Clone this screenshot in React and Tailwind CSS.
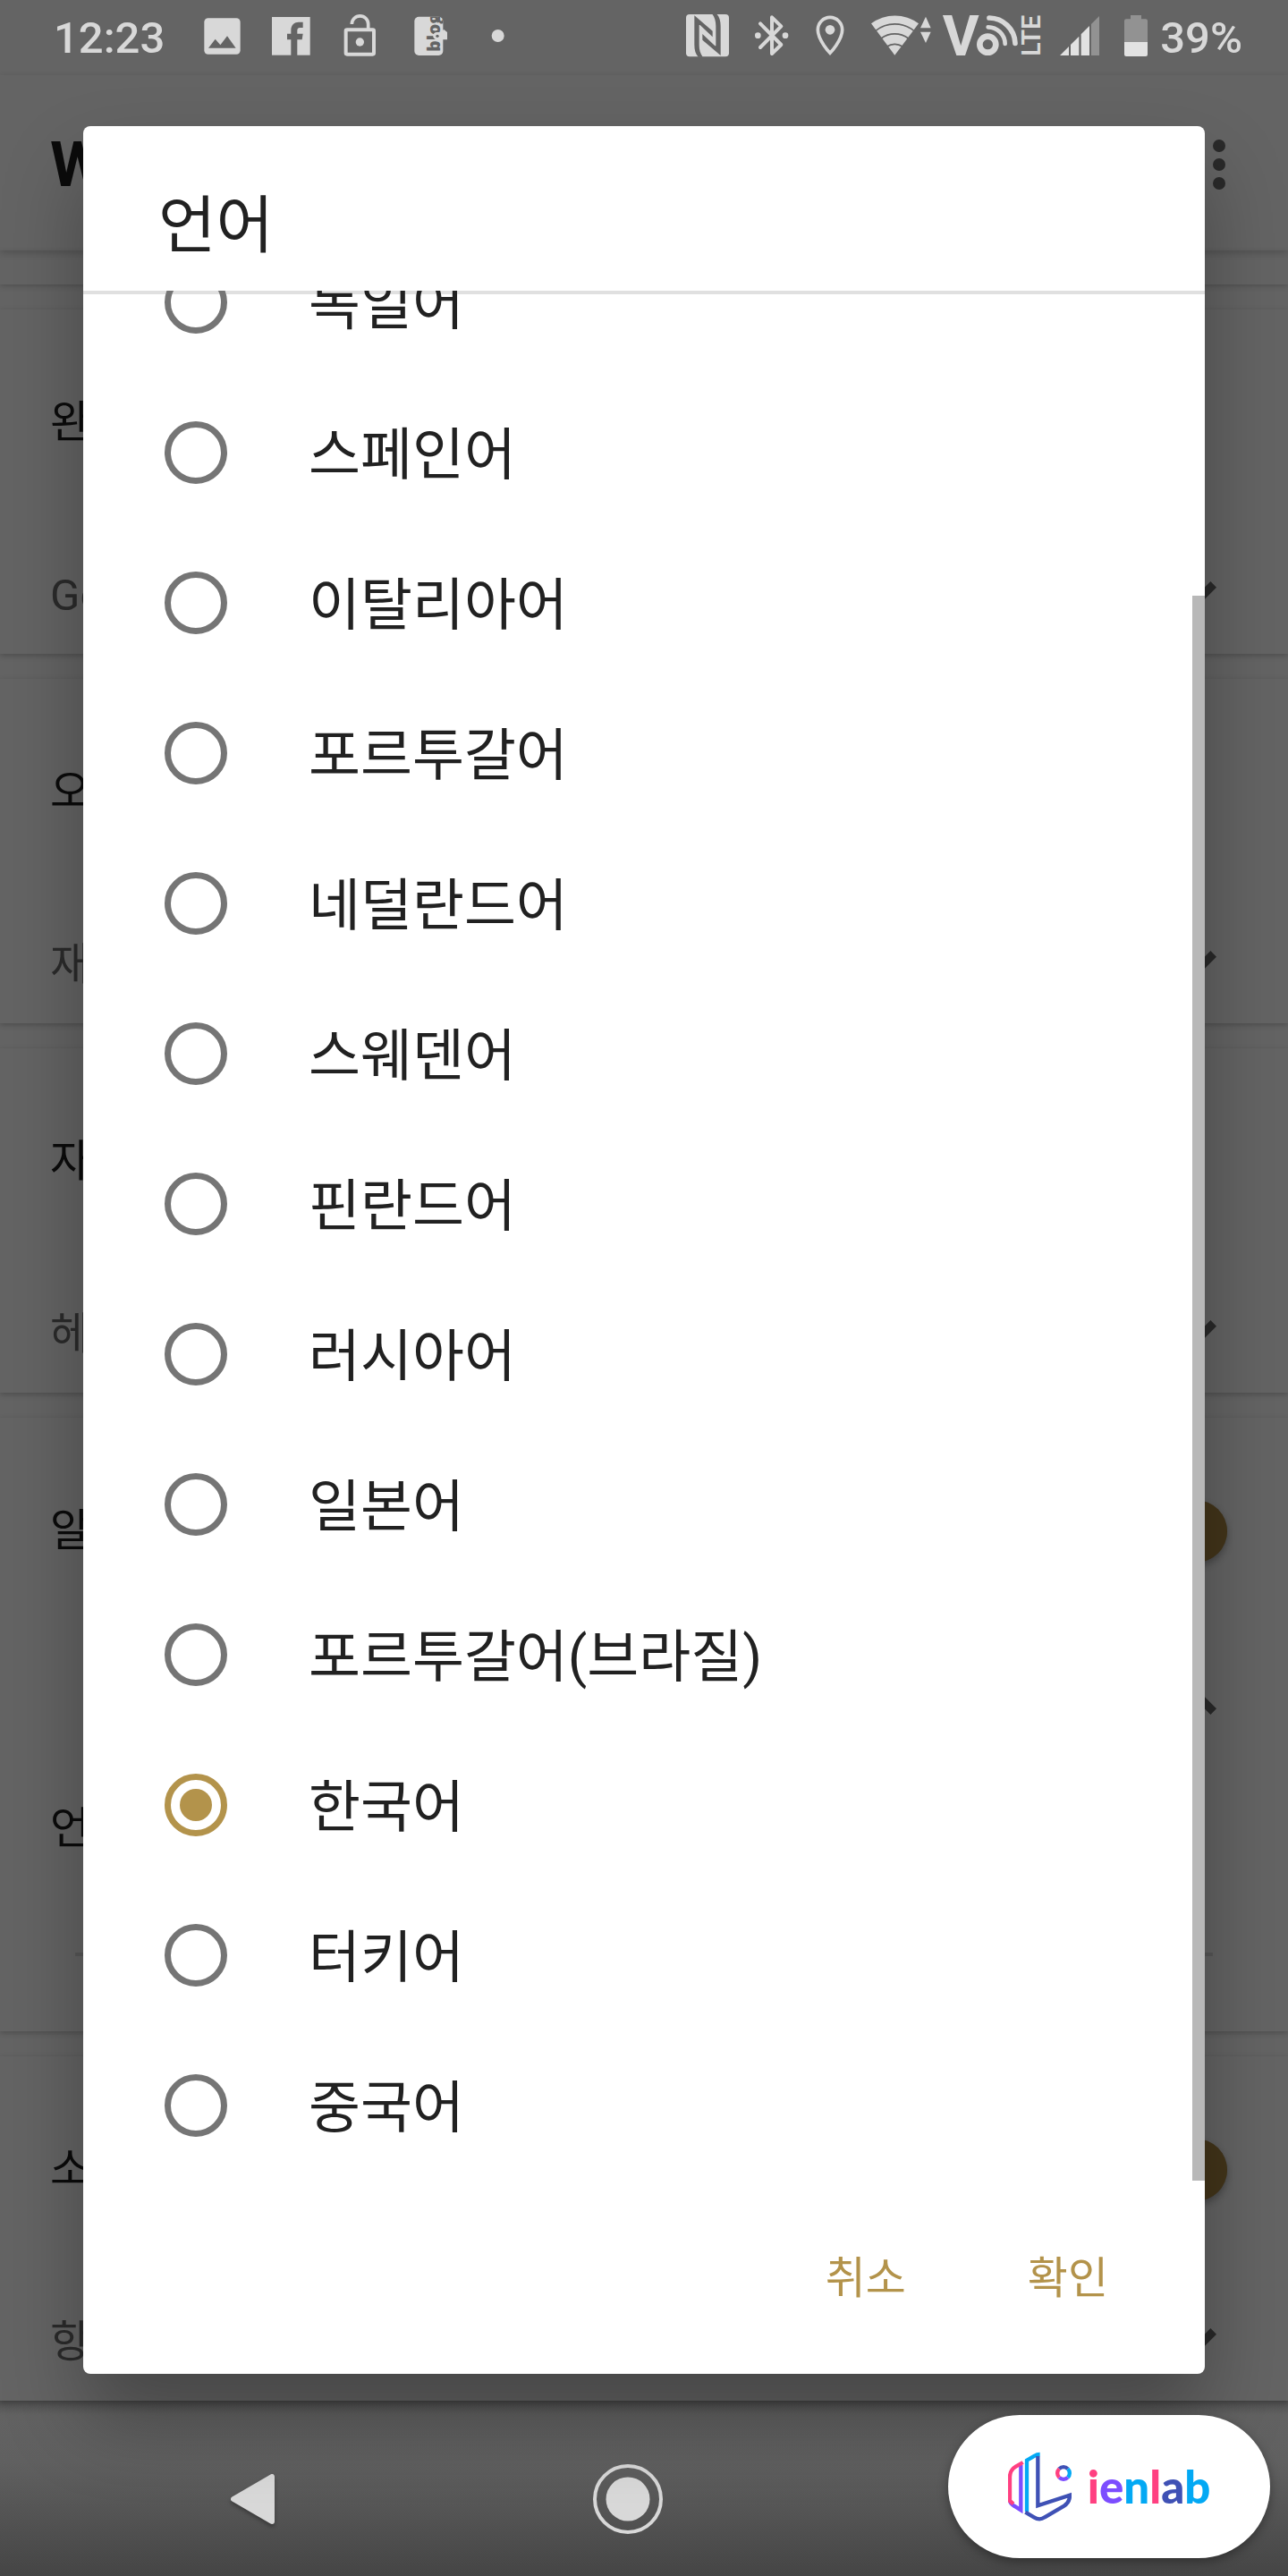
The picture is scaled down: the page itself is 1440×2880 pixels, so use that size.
import React, { useState } from "react";

const LIGHT = "#d8d8d8";
const DIM = "#929292";
const BG = "#646464";

const LANGUAGES = [
  "독일어",
  "스페인어",
  "이탈리아어",
  "포르투갈어",
  "네덜란드어",
  "스웨덴어",
  "핀란드어",
  "러시아어",
  "일본어",
  "포르투갈어(브라질)",
  "한국어",
  "터키어",
  "중국어",
];

/* ---------- status bar ---------- */

function NotificationIcons() {
  return (
    <div className="flex items-center gap-7">
      <svg className="h-[84px] w-[49px]" viewBox="552 0 147 252" aria-label="사진">
        <rect x="565" y="61" width="121" height="121" rx="13" fill={LIGHT} />
        <path d="M579 161 602 131 619 151 642 121 671 161Z" fill={BG} />
      </svg>
      <svg className="h-[84px] w-[49px]" viewBox="783 0 147 252" aria-label="Facebook">
        <rect x="792" y="57" width="128" height="128" fill={LIGHT} />
        <path
          d="M856 186V133H843V113H856V102C856 83 868 74 882 74H896V93H886C879 93 877 97 877 103V113H896L893 133H877V186Z"
          fill={BG}
        />
      </svg>
      <svg className="h-[84px] w-[49px]" viewBox="1014 0 147 252" aria-label="잠금 해제">
        <rect x="1040" y="100" width="94" height="82" rx="4" fill="none" stroke={LIGHT} strokeWidth="12" />
        <path d="M1060 81A27 27 0 0 1 1115 81V96" fill="none" stroke={LIGHT} strokeWidth="11" />
        <circle cx="1087" cy="141" r="14" fill={LIGHT} />
      </svg>
      <svg className="h-[84px] w-[49px]" viewBox="1245 0 147 252" aria-label="블로그">
        <defs>
          <clipPath id="blog-clip">
            <rect x="1270" y="56" width="96" height="130" rx="15" />
          </clipPath>
        </defs>
        <rect x="1270" y="56" width="96" height="130" rx="15" fill={LIGHT} />
        <g clipPath="url(#blog-clip)">
          <text
            transform="translate(1356 173) rotate(-90)"
            fontFamily="Open Sans, sans-serif"
            fontWeight="800"
            fontSize="58"
            fill={BG}
          >
            blog
          </text>
        </g>
        <path d="M1345 108H1362L1368 98 1380 108V133H1345A12 12 0 0 1 1345 108Z" fill={LIGHT} />
        <circle cx="1347" cy="121" r="5" fill={BG} />
      </svg>
      <svg className="h-[84px] w-[49px]" viewBox="1474 0 147 252" aria-hidden="true">
        <circle cx="1548" cy="120" r="21" fill={LIGHT} />
      </svg>
    </div>
  );
}

function SystemIcons() {
  return (
    <div className="flex items-center">
      <svg className="h-[84px] w-[66px]" viewBox="30 0 198 252" aria-label="NFC">
        <rect x="48" y="48" width="144" height="142" rx="12" fill={LIGHT} />
        <path
          id="nfc-half"
          d="M76 52 137 104V124L95 84H92V150C92 168 96 180 104 191H89C80 182 76 168 76 150Z"
          fill={BG}
        />
        <use href="#nfc-half" transform="rotate(180 120 119)" />
      </svg>
      <svg className="h-[84px] w-[70px]" viewBox="228 0 210 252" aria-label="블루투스">
        <path
          d="M297 79 367 150 336 180V58L367 88 297 159"
          fill="none"
          stroke={LIGHT}
          strokeWidth="12"
          strokeLinecap="round"
          strokeLinejoin="round"
        />
        <circle cx="289" cy="119" r="10" fill={LIGHT} />
        <circle cx="381" cy="119" r="10" fill={LIGHT} />
      </svg>
      <svg className="h-[84px] w-[62px]" viewBox="438 0 186 252" aria-label="위치">
        <path
          d="M531 178C531 178 490 135 490 100A41 42 0 0 1 572 100C572 135 531 178 531 178Z"
          fill="none"
          stroke={LIGHT}
          strokeWidth="11"
        />
        <circle cx="531" cy="100" r="16" fill={LIGHT} />
      </svg>
      <svg className="h-[84px] w-[88px]" viewBox="624 0 264 252" aria-label="Wi-Fi">
        <path d="M748 185 669 79A132 132 0 0 1 828 79Z" fill={LIGHT} />
        <g fill="none" stroke={BG} strokeWidth="5">
          <path d="M684 103A103 103 0 0 1 812 103" />
          <path d="M702 129A76 76 0 0 1 794 129" />
          <path d="M722 156A46 46 0 0 1 774 156" />
        </g>
        <path d="M834 94H869L852 56ZM834 107H869L852 144Z" fill={LIGHT} />
      </svg>
      <svg className="h-[84px] w-[126px]" viewBox="888 0 378 252" aria-label="VoLTE">
        <text x="908" y="186" fontFamily="Roboto, sans-serif" fontWeight="700" fontSize="188" fill={LIGHT}>
          V
        </text>
        <circle cx="1060" cy="149" r="27" fill="none" stroke={LIGHT} strokeWidth="20" />
        <path d="M1065 60A88 88 0 0 1 1152 145" fill="none" stroke={LIGHT} strokeWidth="17" strokeLinecap="round" />
        <path d="M1061 91A57 57 0 0 1 1118 147" fill="none" stroke={LIGHT} strokeWidth="14" strokeLinecap="round" />
        <text
          transform="translate(1235 188) rotate(-90)"
          fontFamily="Roboto, sans-serif"
          fontWeight="600"
          fontSize="86"
          fill={LIGHT}
        >
          LTE
        </text>
      </svg>
      <svg className="h-[84px] w-[70px]" viewBox="396 0 210 252" aria-label="신호 세기">
        <path d="M432 186 462 156V186ZM468 186V150L496 122V186ZM503 186V115L531 87V186Z" fill="#e2e2e2" />
        <path d="M537 186V81L564 54V186Z" fill={DIM} />
      </svg>
      <svg className="h-[84px] w-[54px]" viewBox="606 0 162 252" aria-label="배터리">
        <path d="M669 51H705V64H720Q726 64 726 70V141H648V70Q648 64 654 64H669Z" fill={DIM} />
        <path d="M648 141H726V183Q726 189 720 189H654Q648 189 648 183Z" fill="#e2e2e2" />
      </svg>
      <span>39%</span>
    </div>
  );
}

function StatusBar() {
  return (
    <div className="flex h-[84px] items-center justify-between pr-[51px] pl-[60px] font-[Roboto,sans-serif] text-[49px] leading-none font-medium text-[#d8d8d8]">
      <div className="flex items-center gap-10">
        <span>12:23</span>
        <NotificationIcons />
      </div>
      <SystemIcons />
    </div>
  );
}

/* ---------- settings behind the dialog ---------- */

function Chevron({ up }) {
  return (
    <svg className="size-28 shrink-0" viewBox="0 0 24 24" fill="#2a2a2a" aria-hidden="true">
      {up ? (
        <path d="M12 8l-6 6 1.41 1.41L12 10.83l4.59 4.58L18 14z" />
      ) : (
        <path d="M16.59 8.59L12 13.17 7.41 8.59 6 10l6 6 6-6z" />
      )}
    </svg>
  );
}

function Switch({ label }) {
  return (
    <input
      type="checkbox"
      role="switch"
      defaultChecked
      aria-label={label}
      className="mr-4 flex h-12 w-[120px] appearance-none items-center justify-end rounded-full bg-[#54492f] before:size-[70px] before:rounded-full before:bg-[#43351a] before:shadow-[0_4px_8px_rgba(0,0,0,0.3)]"
    />
  );
}

function Card({ title, toggle, children }) {
  return (
    <section className="bg-[#646464] pt-[91px] shadow-[0_2px_6px_rgba(0,0,0,0.22)]">
      <div className="flex h-[72px] items-center justify-between pr-[52px] pl-14">
        <h2 className="text-[#0b0b0b]">{title}</h2>
        {toggle && <Switch label={title} />}
      </div>
      {children}
    </section>
  );
}

function ValueRow({ value }) {
  return (
    <div className="mt-[121px] mb-[29px] flex h-[72px] items-center justify-between pr-[52px] pl-14 text-[#2b2b2b]">
      <span>{value}</span>
      <Chevron />
    </div>
  );
}

function Settings() {
  return (
    <div className="text-[49px] leading-[72px]">
      <header className="flex h-[196px] items-center justify-between pt-1 pr-[70px] pl-14 shadow-[0_3px_8px_rgba(0,0,0,0.18)]">
        <h1 className="font-[Roboto,sans-serif] text-[70px] font-bold text-[#0b0b0b]">W</h1>
        <button type="button" aria-label="더보기" className="flex flex-col gap-[7px]">
          <span className="size-3.5 rounded-full bg-[#2a2a2a]" />
          <span className="size-3.5 rounded-full bg-[#2a2a2a]" />
          <span className="size-3.5 rounded-full bg-[#2a2a2a]" />
        </button>
      </header>
      <div className="h-[38px] shadow-[0_2px_6px_rgba(0,0,0,0.18)]" />
      <main className="grid gap-7 pt-7">
        <Card title="완">
          <ValueRow value="Go" />
        </Card>
        <Card title="오">
          <ValueRow value="재" />
        </Card>
        <Card title="자">
          <ValueRow value="헤" />
        </Card>
        <Card title="알" toggle>
          <div className="mt-[117px] flex h-[72px] items-center justify-end pr-[52px]">
            <Chevron up />
          </div>
          <div className="mt-[72px] pl-14 text-[#0b0b0b]">언</div>
          <hr className="mx-[84px] mt-[102px] mb-[84px] border-t-4 border-[#575757]" />
        </Card>
        <Card title="소" toggle>
          <ValueRow value="항" />
        </Card>
      </main>
    </div>
  );
}

/* ---------- language dialog ---------- */

function LanguageDialog() {
  const [selected, setSelected] = useState("한국어");
  return (
    <div className="absolute inset-0 px-[93px] pt-[141px]">
      <div
        role="dialog"
        aria-labelledby="dialog-title"
        className="rounded-lg bg-white shadow-[0_50px_90px_rgba(0,0,0,0.3)]"
      >
        <h2 id="dialog-title" className="px-[84px] pt-16 pb-6 text-[70px] leading-[96px] text-[#212121]">
          언어
        </h2>
        <div className="relative">
          <fieldset className="flex h-[2113px] flex-col justify-end overflow-hidden shadow-[inset_0_4px_0_#e0e0e0]">
            {LANGUAGES.map((name) => (
              <label
                key={name}
                className="flex h-[168px] shrink-0 items-center gap-[91px] px-[91px] text-[63px] leading-[84px] text-[#212121]"
              >
                <input
                  type="radio"
                  name="language"
                  checked={selected === name}
                  onChange={() => setSelected(name)}
                  className="grid size-[70px] shrink-0 appearance-none place-items-center rounded-full border-[7px] border-[#757575] checked:border-[#b3934b] checked:before:size-9 checked:before:rounded-full checked:before:bg-[#b3934b]"
                />
                <span className="pt-1.5">{name}</span>
              </label>
            ))}
          </fieldset>
          <div className="absolute right-0 bottom-0 h-[1772px] w-3.5 bg-[#b8b8b8]" />
        </div>
        <div className="flex h-[216px] items-center justify-end gap-20 pt-1 pr-20 text-[49px] leading-[72px] text-[#b3934b]">
          <button type="button" className="px-7">
            취소
          </button>
          <button type="button" className="px-7">
            확인
          </button>
        </div>
      </div>
    </div>
  );
}

/* ---------- navigation bar and badge ---------- */

function NavigationBar() {
  return (
    <nav className="grid h-[196px] grid-cols-3 items-center justify-items-center bg-[linear-gradient(to_bottom,#4e4e4e_0px,#626262_16px,#606060_35%,#454545_100%)] pt-6 pr-[110px] pl-[73px]">
      <button type="button" aria-label="뒤로">
        <svg className="h-[58px] w-[52px] drop-shadow-[0_3px_2px_rgba(0,0,0,0.3)]" viewBox="0 0 52 58">
          <path d="M4 29 47 4V54Z" fill={LIGHT} stroke={LIGHT} strokeWidth="6" strokeLinejoin="round" />
        </svg>
      </button>
      <button type="button" aria-label="홈">
        <svg className="size-20" viewBox="0 0 80 80">
          <circle cx="40" cy="40" r="37" fill="none" stroke={LIGHT} strokeWidth="4" />
          <circle cx="40" cy="40" r="24.5" fill={LIGHT} />
        </svg>
      </button>
    </nav>
  );
}

function IenlabBadge() {
  return (
    <div className="absolute right-5 bottom-5 flex h-40 w-[360px] items-center justify-center gap-[18px] rounded-full bg-white shadow-[0_4px_12px_rgba(0,0,0,0.35)]">
      <svg className="h-20 w-[71px] shrink-0" viewBox="258 180 213 240" fill="none" strokeWidth="13" aria-hidden="true">
        <path d="M264 346Q265 358 280 366L301 379V228" stroke="#7c4dff" />
        <path d="M308 219 284 233Q264 245 264 268V348L276 358" stroke="#ff4081" />
        <path d="M321 384V212L347 197Q354 192 365 192" stroke="#03a9f4" />
        <path d="M358 198V364L465 329Q465 353 446 365L381 403Q364 415 345 403L316 386" stroke="#3f51b5" />
        <path d="M429.500 240.500A20.500 20.500 0 0 1 458.500 240.500" stroke="#3f51b5" />
        <path d="M458.500 240.500A20.500 20.500 0 0 1 458.500 269.500" stroke="#03a9f4" />
        <path d="M458.500 269.500A20.500 20.500 0 0 1 429.500 269.500" stroke="#7c4dff" />
        <path d="M429.500 269.500A20.500 20.500 0 0 1 429.500 240.500" stroke="#ff4081" />
      </svg>
      <span className="font-[Lato,sans-serif] text-[51px] leading-[60px] font-black">
        <span className="text-[#ff4081]">i</span>
        <span className="text-[#7c4dff]">e</span>
        <span className="text-[#03a9f4]">n</span>
        <span className="text-[#ff4081]">l</span>
        <span className="text-[#3f51b5]">a</span>
        <span className="text-[#03a9f4]">b</span>
      </span>
    </div>
  );
}

export default function App() {
  return (
    <div className="relative overflow-hidden bg-[#646464] font-[Roboto,'Noto_Sans_CJK_KR',sans-serif]">
      <StatusBar />
      <Settings />
      <NavigationBar />
      <LanguageDialog />
      <IenlabBadge />
    </div>
  );
}
